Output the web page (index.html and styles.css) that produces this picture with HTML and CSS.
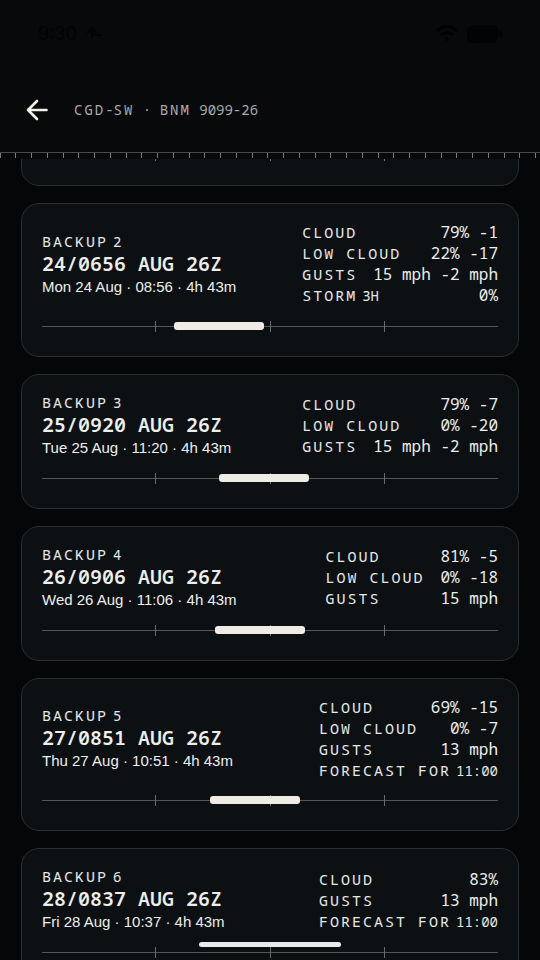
FILE: index.html
```html
<!DOCTYPE html>
<html lang="en">
<head>
<meta charset="utf-8">
<meta name="viewport" content="width=device-width, initial-scale=1">
<title>CGD-SW · BNM 9099-26</title>
<link rel="stylesheet" href="styles.css">
</head>
<body>
<div class="screen">
  <header class="top">
    <div class="status">
      <span class="clock">9:30</span>
      <svg class="plane" width="20" height="14" viewBox="0 0 20 14"><path d="M2 6 7 1l4 5M7 1v11M9 8h8"/></svg>
      <svg class="wifi" width="24" height="18" viewBox="0 0 24 18"><path d="M2 6Q12-3 22 6M6 10q6-5 12 0"/><circle cx="12" cy="14" r="2"/></svg>
      <svg width="35" height="18" viewBox="0 0 35 18"><rect width="31" height="18" rx="6"/><rect x="32" y="6" width="3" height="6" rx="1"/></svg>
    </div>
    <div class="bar">
      <button class="back" type="button" aria-label="Back">
        <svg width="24" height="24" viewBox="0 0 24 24"><path d="M22.500 12H4M13 3 4 12l9 9"/></svg>
      </button>
      <h1 class="heading">CGD<span class="flat">-</span>SW<span class="flat"> · </span>BNM<span class="flat"> 9099-26</span></h1>
    </div>
    <div class="ruler"></div>
  </header>

  <main class="list">
    <article class="card">
      <div class="track"><i></i><i></i><i></i></div>
    </article>

    <article class="card">
      <div class="info">
        <div class="slot">
          <p class="label">BACKUP<span class="num"> 2</span></p>
          <h2 class="dtg">24/0656 AUG 26Z</h2>
          <p class="local">Mon 24 Aug · 08:56 · 4h 43m</p>
        </div>
        <dl class="wx">
          <div><dt class="label">CLOUD</dt><dd>79% -1</dd></div>
          <div><dt class="label">LOW CLOUD</dt><dd>22% -17</dd></div>
          <div><dt class="label">GUSTS</dt><dd>15 mph -2 mph</dd></div>
          <div><dt class="label">STORM<span class="num"> 3H</span></dt><dd>0%</dd></div>
        </dl>
      </div>
      <div class="track"><i></i><i></i><i></i><b style="left:28.900%"></b></div>
    </article>

    <article class="card">
      <div class="info">
        <div class="slot">
          <p class="label">BACKUP<span class="num"> 3</span></p>
          <h2 class="dtg">25/0920 AUG 26Z</h2>
          <p class="local">Tue 25 Aug · 11:20 · 4h 43m</p>
        </div>
        <dl class="wx">
          <div><dt class="label">CLOUD</dt><dd>79% -7</dd></div>
          <div><dt class="label">LOW CLOUD</dt><dd>0% -20</dd></div>
          <div><dt class="label">GUSTS</dt><dd>15 mph -2 mph</dd></div>
        </dl>
      </div>
      <div class="track"><i></i><i></i><i></i><b style="left:38.900%"></b></div>
    </article>

    <article class="card">
      <div class="info">
        <div class="slot">
          <p class="label">BACKUP<span class="num"> 4</span></p>
          <h2 class="dtg">26/0906 AUG 26Z</h2>
          <p class="local">Wed 26 Aug · 11:06 · 4h 43m</p>
        </div>
        <dl class="wx">
          <div><dt class="label">CLOUD</dt><dd>81% -5</dd></div>
          <div><dt class="label">LOW CLOUD</dt><dd>0% -18</dd></div>
          <div><dt class="label">GUSTS</dt><dd>15 mph</dd></div>
        </dl>
      </div>
      <div class="track"><i></i><i></i><i></i><b style="left:37.900%"></b></div>
    </article>

    <article class="card">
      <div class="info">
        <div class="slot">
          <p class="label">BACKUP<span class="num"> 5</span></p>
          <h2 class="dtg">27/0851 AUG 26Z</h2>
          <p class="local">Thu 27 Aug · 10:51 · 4h 43m</p>
        </div>
        <dl class="wx">
          <div><dt class="label">CLOUD</dt><dd>69% -15</dd></div>
          <div><dt class="label">LOW CLOUD</dt><dd>0% -7</dd></div>
          <div><dt class="label">GUSTS</dt><dd>13 mph</dd></div>
          <div class="note"><dt class="label">FORECAST FOR<span class="num"> 11:00</span></dt></div>
        </dl>
      </div>
      <div class="track"><i></i><i></i><i></i><b style="left:36.900%"></b></div>
    </article>

    <article class="card">
      <div class="info">
        <div class="slot">
          <p class="label">BACKUP<span class="num"> 6</span></p>
          <h2 class="dtg">28/0837 AUG 26Z</h2>
          <p class="local">Fri 28 Aug · 10:37 · 4h 43m</p>
        </div>
        <dl class="wx">
          <div><dt class="label">CLOUD</dt><dd>83%</dd></div>
          <div><dt class="label">GUSTS</dt><dd>13 mph</dd></div>
          <div class="note"><dt class="label">FORECAST FOR<span class="num"> 11:00</span></dt></div>
        </dl>
      </div>
      <div class="track"><i></i><i></i><i></i></div>
    </article>
  </main>
  <div class="home"></div>
</div>
</body>
</html>
```
FILE: styles.css
```css
* { box-sizing: border-box; margin: 0; }
body { background: #040607; }
.screen {
  position: relative;
  height: 100vh;
  overflow: hidden;
  color: #eceeec;
  font-family: "Noto Sans Mono", "DejaVu Sans Mono", monospace;
}

/* Header */
.top { position: relative; z-index: 1; background: #07090b; }
.status {
  display: flex;
  align-items: center;
  gap: 8px;
  height: 68px;
  padding: 0 38px;
  color: #020304;
  fill: #020304;
}
.clock { font: 400 18px/24px Inter, sans-serif; }
.plane { fill: none; stroke: #020304; stroke-width: 2; }
.wifi { margin-left: auto; }
.wifi path { fill: none; stroke: #020304; stroke-width: 3; }
.bar {
  display: flex;
  align-items: center;
  gap: 26px;
  height: 84px;
  padding: 0 24px;
}
.back { display: flex; padding: 0; border: 0; background: none; }
.back path { fill: none; stroke: #f2f2ea; stroke-width: 2.600; stroke-linecap: round; stroke-linejoin: round; }
.heading {
  color: #a9abab;
  font-size: 14px;
  font-weight: 400;
  line-height: 20px;
  letter-spacing: 2px;
}
.flat { letter-spacing: 0; }
.ruler {
  height: 7px;
  border-top: 1px solid #45494b;
  background-image:
    linear-gradient(90deg, #777b7c 1px, transparent 1px 15px, #777b7c 15px 16px, transparent 16px 31px, #777b7c 31px 32px, transparent 32px 47px, #777b7c 47px 48px, transparent 48px);
  background-size: 63px 5px;
  background-repeat: repeat-x;
}

/* Window cards */
.list {
  display: flex;
  flex-direction: column;
  gap: 17px;
  margin-top: -43px;
  padding: 0 21px;
}
.card {
  flex: none;
  padding: 18px 20px 23px;
  border: 1px solid #2a2f31;
  border-radius: 18px;
  background: #0c1012;
}
.info {
  display: flex;
  align-items: center;
  justify-content: space-between;
}
.label {
  height: 19px;
  font-size: 15px;
  font-weight: 400;
  line-height: 19px;
  letter-spacing: 2px;
  color: #e6e8e6;
}
.num {
  display: inline-block;
  margin-left: 5px;
  font-size: 14px;
  line-height: 16px;
  letter-spacing: 0;
}
.dtg { font-size: 20px; font-weight: 600; line-height: 25px; }
.local { font: 400 15px/21px "Liberation Sans", Arial, sans-serif; }
.wx div { display: flex; justify-content: space-between; gap: 16px; height: 21px; }
.wx dt { line-height: 21px; }
.wx dd { margin: 0; font-size: 16px; line-height: 21px; }
.wx .note { height: 20px; }
.wx .note dt { line-height: 20px; }

/* Day track with quarter marks */
.track {
  position: relative;
  display: flex;
  justify-content: space-evenly;
  align-items: center;
  height: 14px;
  margin-top: 13px;
  background: linear-gradient(#535859, #535859) center / 100% 1px no-repeat;
}
.track i { width: 1px; height: 11px; background: #686d6f; }
.track b {
  position: absolute;
  top: 3px;
  width: 19.700%;
  height: 8px;
  border-radius: 3px;
  background: #eeece5;
}

.home {
  position: absolute;
  bottom: 13px;
  left: 50%;
  width: 142px;
  height: 5px;
  margin-left: -71px;
  border-radius: 3px;
  background: #e9ebea;
  z-index: 2;
}
```
